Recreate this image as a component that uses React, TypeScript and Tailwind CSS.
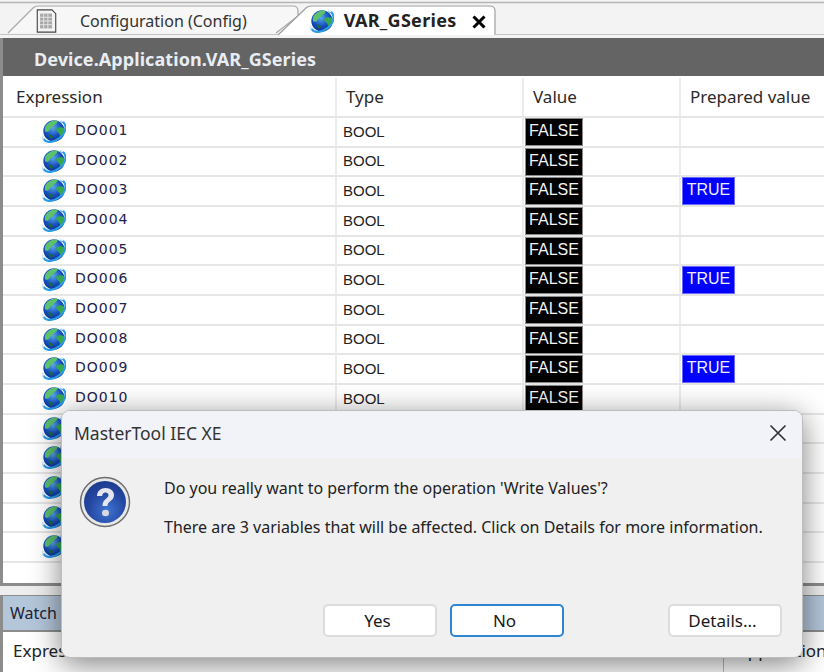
const rows = [
  { name: "DO001" },
  { name: "DO002" },
  { name: "DO003", prepared: true },
  { name: "DO004" },
  { name: "DO005" },
  { name: "DO006", prepared: true },
  { name: "DO007" },
  { name: "DO008" },
  { name: "DO009", prepared: true },
  { name: "DO010" },
  { name: "DO011" },
  { name: "DO012" },
  { name: "DO013" },
  { name: "DO014" },
  { name: "DO015" },
];

function Globe({ size = 24 }: { size?: number }) {
  return (
    <svg width={size} height={size} viewBox="1 1 22 22" className="shrink-0">
      <defs>
        <radialGradient id="sea" cx="45%" cy="35%" r="70%">
          <stop offset="0%" stopColor="#5aa8ea" />
          <stop offset="55%" stopColor="#1750c0" />
          <stop offset="100%" stopColor="#0b2a86" />
        </radialGradient>
      </defs>
      <circle cx="12" cy="12" r="9.800" fill="url(#sea)" />
      <path d="M4 8c2-4 7-6.500 11-5.500 1 1-1 3-3 4.500-1 2-3 2-4 4-1 1.500-2.500 2-4 1.500-.6-1.500-.6-3 0-4.500z" fill="#5cc06c" />
      <path d="M14 10c2-1.500 5-2 7.500-.5.500 3-.5 6-2.500 8.500-1.500-.5-1.500-3-2.500-4-1-1-3-2-2.500-4z" fill="#36a850" />
      <path d="M7 15c2 0 3 1 4 2 0 1-1 2-2 2-1-1-2-2-2-4z" fill="#1c6a3c" />
      <path d="M2.500 19.500C5 23.500 12 22.500 17 18.500c4.500-3.500 6.500-8.500 5-12.500-.5-1.500-2-2.500-3.500-3" fill="none" stroke="#2c9be8" strokeWidth="2" strokeLinecap="round" />
      <path d="M2 16.500c-.8 1.200-.8 2.500.5 3" fill="none" stroke="#cfe9fb" strokeWidth="1.800" />
      <path d="M17.500 2.200l3 .8" stroke="#e4f4fe" strokeWidth="1.800" />
    </svg>
  );
}

function QuestionIcon() {
  return (
    <svg width="52" height="52" viewBox="0 0 52 52">
      <defs>
        <radialGradient id="qb" cx="55%" cy="70%" r="75%">
          <stop offset="0%" stopColor="#3f74d4" />
          <stop offset="60%" stopColor="#24469f" />
          <stop offset="100%" stopColor="#1c3a8c" />
        </radialGradient>
      </defs>
      <circle cx="26" cy="26" r="24.500" fill="#e8e8e8" stroke="#6f6f6f" strokeWidth="1.500" />
      <circle cx="26" cy="26" r="21" fill="url(#qb)" />
      <path d="M18 20c0-5 4-8 8.500-8 5 0 8.500 3 8.500 7 0 3-1.500 4.500-4 6.500-2 1.500-2.500 2.500-2.500 4.500h-5c0-3.500 1-5 3-6.800 2-1.700 3-2.700 3-4 0-1.700-1.400-2.700-3-2.700-2 0-3.200 1.300-3.300 3.500z" fill="#e6e6ee" />
      <ellipse cx="26.500" cy="37" rx="3.500" ry="3.200" fill="#d9d9e2" />
    </svg>
  );
}

function DocIcon() {
  return (
    <svg width="21" height="24" viewBox="0 0 22 26">
      <path d="M1 1h16l4 4v20H1z" fill="#f4f4f4" stroke="#444" strokeWidth="1.200" />
      <path d="M4 5h13v16H4z" fill="#a8a8a8" />
      <path d="M4 9h13M4 13h13M4 17h13M8 5v16M12.500 5v16" stroke="#e8e8e8" strokeWidth="1" />
    </svg>
  );
}

function DialogButton({ label, focused }: { label: string; focused?: boolean }) {
  return (
    <button
      className={`w-[114px] h-[33px] pr-[5px] rounded-[5px] bg-white text-[17px] text-[#1a1a1a] ${
        focused ? "border-2 border-[#2f86d0]" : "border-2 border-[#dcdcdc]"
      }`}
    >
      {label}
    </button>
  );
}

export default function App() {
  return (
    <div className="relative w-[824px] h-[672px] overflow-hidden bg-[#eeeeee] font-['Noto_Sans','Open_Sans',sans-serif] text-[#222]">
      {/* tab strip */}
      <div className="relative h-[38px] bg-[#f3f3f3]">
        <svg width="824" height="38" className="absolute left-0 top-0">
          <path d="M0 2.500 H824" stroke="#b5b5b5" strokeWidth="1.500" />
          <path d="M8 33 L33 8 Q35 6 38 6 H293 Q298 6 298 11 V16 L276 33" fill="#f7f7f7" stroke="#a8a8a8" strokeWidth="1.200" />
          <path d="M278 35 L306 8 Q308 6 311 6 H490 Q495 6 495 11 V35" fill="#ffffff" stroke="#a0a0a0" strokeWidth="1.200" />
          <path d="M0 34.500 H278 M495 34.500 H824" stroke="#c4c4c4" strokeWidth="1.200" />
        </svg>
        <div className="relative flex items-center h-[38px] pt-[3px]">
          <div className="ml-[36px] mt-[1px]">
            <DocIcon />
          </div>
          <span className="ml-[23px] text-[16px] text-[#333]">Configuration (Config)</span>
          <div className="ml-[63px]">
            <Globe size={24} />
          </div>
          <span className="ml-[10px] text-[18px] font-bold text-[#222] tracking-[0.3px]">VAR_GSeries</span>
          <svg width="14" height="14" viewBox="0 0 14 14" className="ml-[15px] mt-[2px]">
            <path d="M1.500 1.500L12.500 12.500M12.500 1.500L1.500 12.500" stroke="#000" strokeWidth="3" />
          </svg>
        </div>
      </div>

      {/* editor */}
      <div className="h-[548px] border-l-[3px] border-b-[3px] border-[#8c8c8c] bg-white flex flex-col">
        <div className="h-[38px] shrink-0 bg-[#646464] flex items-center pl-[31px] pt-[3px] text-[18px] font-bold tracking-[0.07px] text-[#e8edf4] leading-none">
          Device.Application.VAR_GSeries
        </div>
        <div className="h-[40px] shrink-0 mt-[2px] grid grid-cols-[334px_187px_157px_1fr] border-b-2 border-[#e6e6e6] text-[17px] text-[#2a2a2a] items-center">
          <div className="pl-[13px] h-full flex items-center border-r-2 border-[#ececec]">Expression</div>
          <div className="pl-[9px] h-full flex items-center border-r-2 border-[#ececec]">Type</div>
          <div className="pl-[9px] h-full flex items-center border-r-2 border-[#ececec]">Value</div>
          <div className="pl-[9px] h-full flex items-center">Prepared value</div>
        </div>
        {rows.map((r) => (
          <div key={r.name} className="h-[29.67px] shrink-0 grid grid-cols-[334px_187px_157px_1fr] border-b-2 border-[#e6e6e6]">
            <div className="flex items-center pl-[39px] border-r-2 border-[#ececec]">
              <div className="-mt-[2px]">
                <Globe />
              </div>
              <span className="ml-[9px] text-[14px] tracking-[1px] text-[#22224a] font-['DejaVu_Sans',sans-serif] -mt-[3px]">{r.name}</span>
            </div>
            <div className="flex items-center pl-[6px] border-r-2 border-[#ececec] text-[15px] font-['Liberation_Sans',sans-serif] text-[#222]">BOOL</div>
            <div className="border-r-2 border-[#ececec] flex items-stretch pl-[1px]">
              <div className="w-[58px] pb-[2px] bg-black border border-[#8a8a8a] text-[#f4f4f4] text-[16px] font-['Liberation_Sans',sans-serif] flex items-center justify-center">FALSE</div>
            </div>
            <div className="flex items-stretch pl-[1px]">
              {r.prepared && (
                <div className="w-[53px] pb-[2px] bg-[#0000ff] border border-[#6a6aff] text-[#eeeeff] text-[16px] font-['Liberation_Sans',sans-serif] flex items-center justify-center">TRUE</div>
              )}
            </div>
          </div>
        ))}
      </div>

      {/* watch panel */}
      <div className="mt-[9px] flex h-[37px] border-t border-b-2 border-[#8c8c8c] border-l-[3px] bg-[#b4c6da] items-center pl-[7px] text-[16px] text-[#223]">
        Watch
      </div>
      <div className="h-[40px] border-l-[3px] border-[#8c8c8c] bg-white grid grid-cols-[720px_1fr] text-[17px] text-[#222]">
        <div className="pl-[10px] pt-[6px]">Expression</div>
        <div className="border-l border-[#bbbbbb] pl-[13px] pt-[6px] whitespace-nowrap">Application</div>
      </div>

      {/* dialog */}
      <div className="absolute left-[61px] top-[410px] w-[742px] h-[248px] rounded-[9px] bg-[#f0f0f0] border border-[#bdbdbd] shadow-[0_6px_30px_rgba(0,0,0,0.5)] overflow-hidden flex flex-col">
        <div className="h-[47px] shrink-0 bg-[#f1f3f9] flex items-center justify-between pl-[12px] pr-[15px] pb-[3px] text-[17.500px] text-[#333]">
          <span>MasterTool IEC XE</span>
          <svg width="18" height="18" viewBox="0 0 18 18">
            <path d="M1.500 1.500L16.500 16.500M16.500 1.500L1.500 16.500" stroke="#333" strokeWidth="1.700" />
          </svg>
        </div>
        <div className="flex flex-1 pl-[17px] pt-[18px]">
          <QuestionIcon />
          <div className="ml-[33px] text-[16px] text-[#222]">
            <p>Do you really want to perform the operation 'Write Values'?</p>
            <p className="mt-[15px]">There are 3 variables that will be affected. Click on Details for more information.</p>
          </div>
        </div>
        <div className="flex pl-[261px] pb-[20px]">
          <DialogButton label="Yes" />
          <div className="ml-[13px]">
            <DialogButton label="No" focused />
          </div>
          <div className="ml-[104px]">
            <DialogButton label="Details..." />
          </div>
        </div>
      </div>
    </div>
  );
}
